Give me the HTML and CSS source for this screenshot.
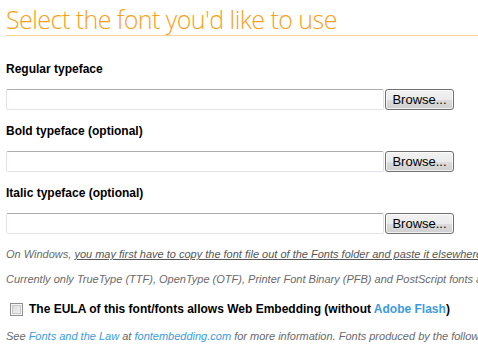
FILE: index.html
```html
<!DOCTYPE html>
<html>
<head>
<meta charset="utf-8">
<link rel="stylesheet" href="styles.css">
</head>
<body>
<div class="page">
  <h1 class="title">Select the font you'd like to use</h1>

  <div class="field first">
    <div class="label">Regular typeface</div>
    <div class="file-row">
      <span class="file-input"></span>
      <span class="browse">Browse...</span>
    </div>
  </div>

  <div class="field">
    <div class="label">Bold typeface (optional)</div>
    <div class="file-row">
      <span class="file-input"></span>
      <span class="browse">Browse...</span>
    </div>
  </div>

  <div class="field">
    <div class="label">Italic typeface (optional)</div>
    <div class="file-row">
      <span class="file-input"></span>
      <span class="browse">Browse...</span>
    </div>
  </div>

  <p class="note first-note">On Windows, <span class="uline">you may first have to copy the font file out of the Fonts folder and paste it elsewhere</span> before it can be uploaded.</p>
  <p class="note">Currently only TrueType (TTF), OpenType (OTF), Printer Font Binary (PFB) and PostScript fonts are supported.</p>

  <label class="eula">
    <input type="checkbox" class="check">
    <span>The EULA of this font/fonts allows Web Embedding (without <a class="link" href="#">Adobe Flash</a>)</span>
  </label>

  <p class="note see">See <a class="link" href="#">Fonts and the Law</a> at <a class="link" href="#">fontembedding.com</a> for more information. Fonts produced by the following foundries are not allowed.</p>
</div>
</body>
</html>
```

FILE: styles.css
```css
html, body {
  margin: 0;
  padding: 0;
  background: #ffffff;
  overflow: hidden;
}

.page {
  padding: 3px 0 0 6px;
  width: 472px;
  font-family: "Liberation Sans", Arial, sans-serif;
}

.title {
  margin: 0;
  font-family: "Open Sans", "Noto Sans", sans-serif;
  font-weight: 300;
  font-size: 25px;
  line-height: 32px;
  color: #f7a11a;
  border-bottom: 1px solid #f6d596;
  letter-spacing: -0.55px;
  white-space: nowrap;
}

.field {
  margin-bottom: 14px;
}

.field.first {
  margin-top: 26px;
}

.label {
  font-size: 12px;
  line-height: 14px;
  font-weight: bold;
  color: #000;
  margin-bottom: 13px;
}

.file-row {
  display: flex;
  align-items: stretch;
  height: 21px;
}

.file-input {
  box-sizing: border-box;
  width: 378px;
  height: 21px;
  border: 1px solid #e2e3ea;
  border-top-color: #abadb3;
  border-radius: 2px;
  background: #fff;
}

.browse {
  box-sizing: border-box;
  margin-left: 1px;
  width: 69px;
  height: 21px;
  border: 1px solid #707070;
  border-radius: 3px;
  background: linear-gradient(#f2f2f2 0%, #ebebeb 50%, #dddddd 51%, #cfcfcf 100%);
  box-shadow: inset 0 0 0 1px rgba(255,255,255,0.7);
  font-family: "Liberation Sans", Arial, sans-serif;
  font-size: 13px;
  line-height: 19px;
  color: #000;
  text-align: center;
}

.note {
  margin: 0 0 12px 0;
  font-size: 11px;
  line-height: 13px;
  font-style: italic;
  color: #6a6a6a;
  white-space: nowrap;
}

.first-note {
  margin-top: 0;
}

.uline {
  color: #555555;
  text-decoration: underline;
}

.eula {
  display: flex;
  align-items: center;
  margin-top: 16px;
  height: 14px;
  font-size: 12px;
  line-height: 14px;
  font-weight: bold;
  color: #000;
  white-space: nowrap;
}

.check {
  appearance: none;
  -webkit-appearance: none;
  box-sizing: border-box;
  width: 13px;
  height: 13px;
  margin: 0 6px 0 4px;
  border: 1px solid #8e8f8f;
  background: linear-gradient(135deg, #d9d9d9 0%, #f4f4f4 100%);
  box-shadow: inset 0 0 0 1px #f6f6f6, inset 0 0 0 2px #c8c8c8;
}

.link {
  color: #3b9be0;
  text-decoration: none;
}

.see {
  margin-top: 14px;
}
```
